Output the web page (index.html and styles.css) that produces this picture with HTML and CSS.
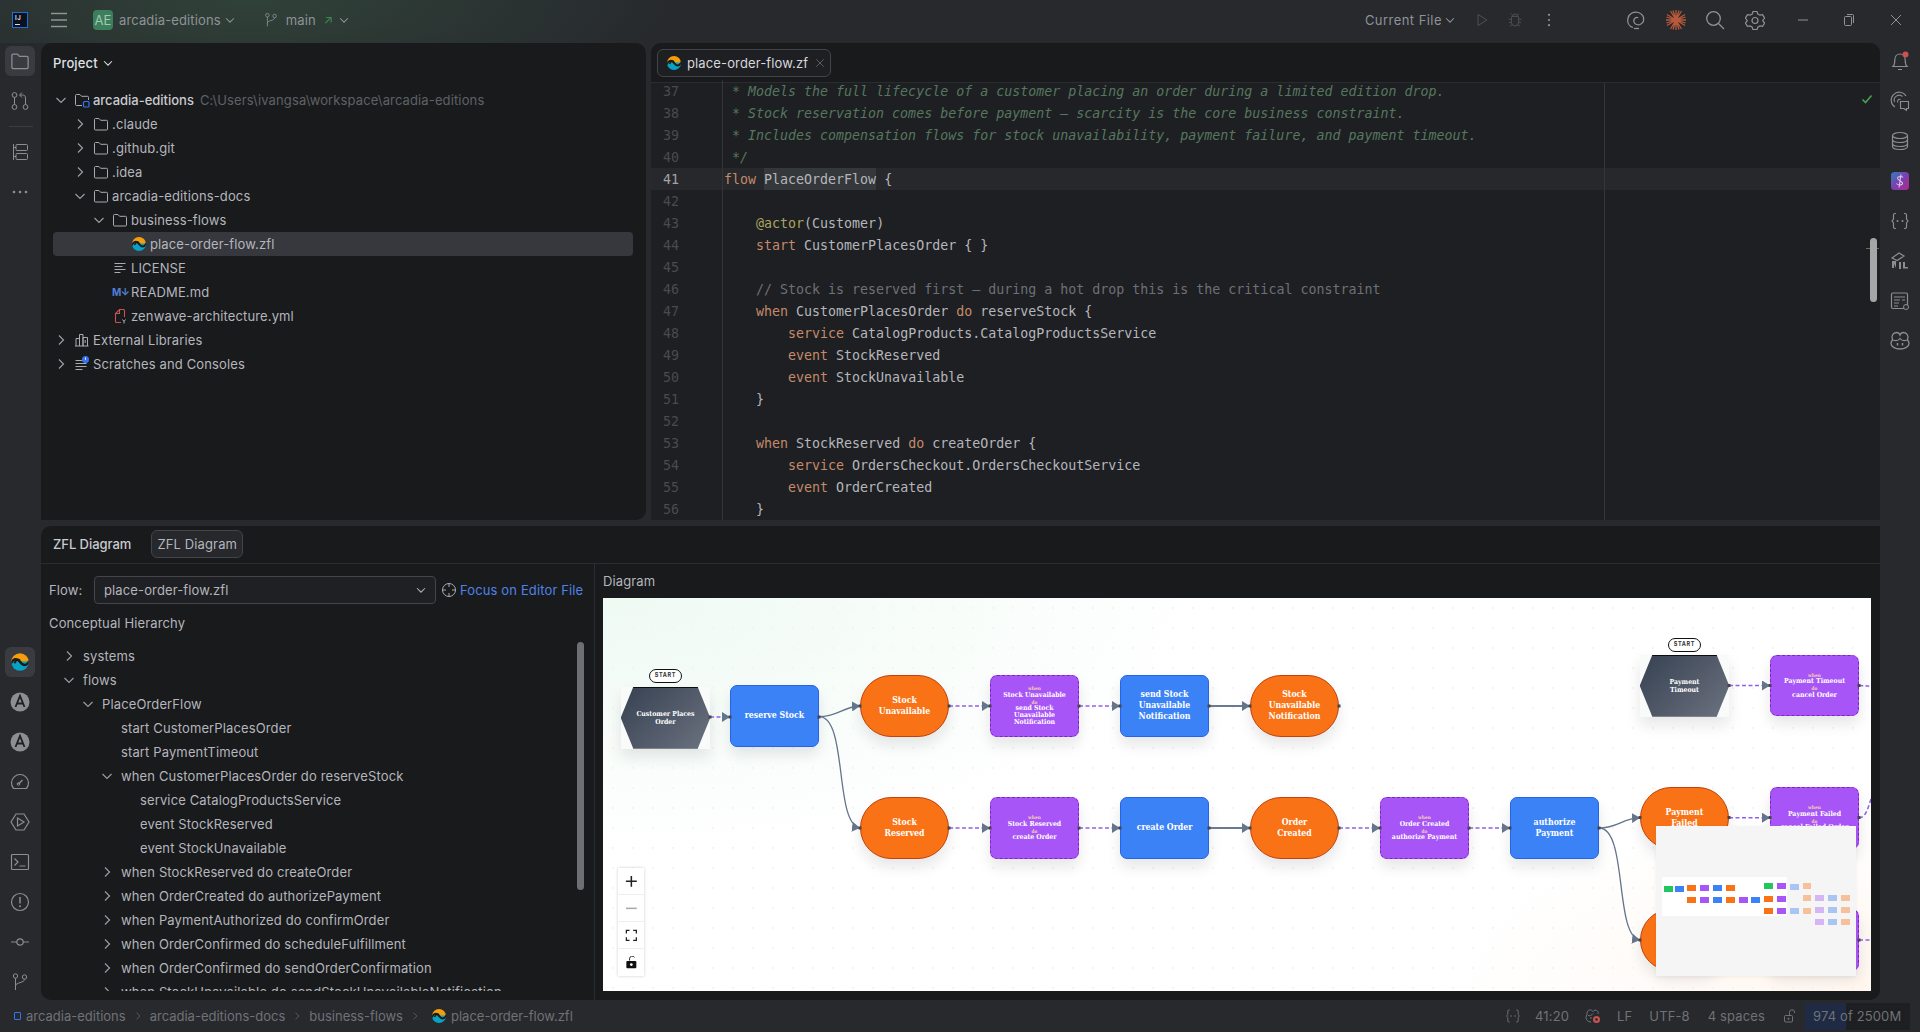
FILE: index.html
```html
<!DOCTYPE html>
<html lang="en">
<head>
<meta charset="utf-8">
<title>arcadia-editions – place-order-flow.zfl</title>
<link rel="stylesheet" href="styles.css">
</head>
<body>
<svg class="sprite" aria-hidden="true">
  <defs>
    <clipPath id="zc"><circle cx="8" cy="8" r="7"/></clipPath>
    <linearGradient id="sg" x1="0" y1="0" x2="1" y2="1"><stop offset="0" stop-color="#2f7fc1"/><stop offset=".5" stop-color="#7b3fb0"/><stop offset="1" stop-color="#b02a8c"/></linearGradient>
  </defs>
  <symbol id="zfl" viewBox="0 0 16 16">
    <g clip-path="url(#zc)"><rect width="16" height="8.5" fill="#f59e0b"/><rect y="7.5" width="16" height="9" fill="#06a3c4"/>
    <path d="M0 10.5C2.5 5 5.5 4.500 8 7.800S13 12 16 6.500" fill="none" stroke="#191a1c" stroke-width="2"/>
    <path d="M3.500 9C5 6 6.500 5.500 8 7" fill="none" stroke="#191a1c" stroke-width="1.600"/></g>
  </symbol>
  <symbol id="cr" viewBox="0 0 16 16"><path d="M6 3.500 10.500 8 6 12.500" fill="none" stroke="currentColor" stroke-width="1.200"/></symbol>
  <symbol id="cd" viewBox="0 0 16 16"><path d="M3.500 6 8 10.500 12.500 6" fill="none" stroke="currentColor" stroke-width="1.200"/></symbol>
  <symbol id="folder" viewBox="0 0 16 16"><path d="M1.500 3.500a1 1 0 0 1 1-1h3.400l1.700 1.800h5.900a1 1 0 0 1 1 1v7.700a1 1 0 0 1-1 1H2.500a1 1 0 0 1-1-1z" fill="none" stroke="currentColor"/></symbol>
  <symbol id="rootf" viewBox="0 0 16 16"><path d="M8 13.500H2.500a1 1 0 0 1-1-1v-9a1 1 0 0 1 1-1h3.400l1.700 1.800h5.900a1 1 0 0 1 1 1V8" fill="none" stroke="currentColor"/><rect x="9.500" y="9.500" width="5.500" height="5.500" rx="1" fill="none" stroke="#3574f0" stroke-width="1.200"/></symbol>
  <symbol id="text" viewBox="0 0 16 16"><path d="M2.500 3.500h11M2.500 6.500h8M2.500 9.500h11M2.500 12.500h6" fill="none" stroke="currentColor"/></symbol>
  <symbol id="yml" viewBox="0 0 16 16"><path d="M9 14.500H4.500a1 1 0 0 1-1-1v-8l4-4h4a1 1 0 0 1 1 1V9" fill="none" stroke="#c75450" stroke-width="1.100"/><path d="M7.500 1.500v4h-4" fill="none" stroke="#c75450" stroke-width="1.100"/><path d="M10.500 11.500l1.500 2 1.500-2M12 13.500v2" fill="none" stroke="#aeb0b5"/></symbol>
  <symbol id="libs" viewBox="0 0 16 16"><path d="M2 14V6.500h3.500V14M5.500 14V2.500H9V14M9 14V5.500h4.500V14M1 14h13.500M11.200 8v3" fill="none" stroke="currentColor"/></symbol>
  <symbol id="scratch" viewBox="0 0 16 16"><path d="M1.500 4.500h8M1.500 7.500h11M1.500 10.500h11M1.500 13.500h7" fill="none" stroke="currentColor"/><circle cx="11.500" cy="3.500" r="3.500" fill="#3574f0"/><path d="M11.500 1.500v2.300" stroke="#fff" stroke-width=".9"/></symbol>
  <symbol id="hamb" viewBox="0 0 20 20"><path d="M2 3.500h16M2 10h16M2 16.500h16" fill="none" stroke="currentColor" stroke-width="1.300"/></symbol>
  <symbol id="branch" viewBox="0 0 20 20"><circle cx="5.500" cy="4" r="2.200" fill="none" stroke="currentColor"/><circle cx="14.500" cy="5" r="2.200" fill="none" stroke="currentColor"/><path d="M5.500 6.200V18M14.500 7.200c0 4-9 3-9 6.800" fill="none" stroke="currentColor"/></symbol>
  <symbol id="commit" viewBox="0 0 20 20"><circle cx="4.500" cy="4" r="2.400" fill="none" stroke="currentColor"/><circle cx="4.500" cy="16" r="2.400" fill="none" stroke="currentColor"/><circle cx="15.500" cy="16" r="2.400" fill="none" stroke="currentColor"/><path d="M4.500 6.400v7.200M15.500 13.600V7c0-2-1-3-3-3H10M12 1.500 9.500 4l2.500 2.500" fill="none" stroke="currentColor"/></symbol>
  <symbol id="struct" viewBox="0 0 20 20"><path d="M3.500 2v16M3.500 5.500H6M3.500 14.500H6" fill="none" stroke="currentColor"/><rect x="6" y="2.500" width="11.500" height="6" rx="1" fill="none" stroke="currentColor"/><rect x="6" y="11.500" width="11.500" height="6" rx="1" fill="none" stroke="currentColor"/></symbol>
  <symbol id="dots" viewBox="0 0 20 20"><circle cx="4" cy="10" r="1.300" fill="currentColor"/><circle cx="10" cy="10" r="1.300" fill="currentColor"/><circle cx="16" cy="10" r="1.300" fill="currentColor"/></symbol>
  <symbol id="ang" viewBox="0 0 20 20"><circle cx="10" cy="10" r="9.500" fill="currentColor"/><path d="M5.500 15 10 4l4.500 11M7.500 11.500h5" fill="none" stroke="#1f2024" stroke-width="1.800"/></symbol>
  <symbol id="gauge" viewBox="0 0 20 20"><path d="M3.500 16.500h13a8.500 8.500 0 1 0-13 0z" fill="none" stroke="currentColor" stroke-width="1.200"/><path d="M8.500 12l4-4" fill="none" stroke="currentColor" stroke-width="1.400"/><circle cx="8.500" cy="12" r="1.300" fill="none" stroke="currentColor"/></symbol>
  <symbol id="hexplay" viewBox="0 0 20 20"><path d="M6 2h8l5 8-5 8H6l-5-8z" fill="none" stroke="currentColor" stroke-width="1.200"/><path d="M7.500 6l6.500 4-6.500 4z" fill="none" stroke="currentColor" stroke-width="1.200"/></symbol>
  <symbol id="term" viewBox="0 0 20 20"><rect x="1.500" y="2.500" width="17" height="15" rx="1" fill="none" stroke="currentColor" stroke-width="1.200"/><path d="M4.500 6.500 8 10l-3.500 3.500M9.500 14h6" fill="none" stroke="currentColor" stroke-width="1.200"/></symbol>
  <symbol id="warn" viewBox="0 0 20 20"><circle cx="10" cy="10" r="8.500" fill="none" stroke="currentColor" stroke-width="1.200"/><path d="M10 5v6.500" stroke="currentColor" stroke-width="1.500"/><circle cx="10" cy="14.300" r="1" fill="currentColor"/></symbol>
  <symbol id="cline" viewBox="0 0 20 20"><circle cx="10" cy="10" r="3.200" fill="none" stroke="currentColor" stroke-width="1.200"/><path d="M1 10h5.800M13.200 10H19" stroke="currentColor" stroke-width="1.200"/></symbol>
  <symbol id="bell" viewBox="0 0 20 20"><path d="M10 3C7 3 4.800 5.500 4.800 9c0 3-.3 5-1.800 6.500h14c-1.500-1.500-1.800-3.500-1.800-6.500 0-3.500-2.200-6-5.200-6zM8 18.500h4" fill="none" stroke="currentColor" stroke-width="1.200"/><circle cx="15.500" cy="3.500" r="3" fill="#c75450"/></symbol>
  <symbol id="aichat" viewBox="0 0 20 20"><path d="M5 16A8 8 0 1 1 16 5M4.500 11a5 5 0 0 1 8-5.500M8 11.500a2 2 0 0 1 2.500-3" fill="none" stroke="currentColor" stroke-width="1.100"/><path d="M10.500 10.500h8v7h-2v2l-2.500-2h-3.500z" fill="#27292d" stroke="currentColor" stroke-width="1.100"/></symbol>
  <symbol id="db" viewBox="0 0 20 20"><ellipse cx="10" cy="4.500" rx="7.500" ry="3" fill="none" stroke="currentColor" stroke-width="1.200"/><path d="M2.500 4.500v11c0 1.700 3.400 3 7.500 3s7.500-1.300 7.500-3v-11M2.500 8.500c0 1.700 3.400 3 7.500 3s7.500-1.300 7.500-3M2.500 12.500c0 1.700 3.400 3 7.500 3s7.500-1.300 7.500-3" fill="none" stroke="currentColor" stroke-width="1.200"/></symbol>
  <symbol id="sapp" viewBox="0 0 20 20"><rect x="1" y="1" width="18" height="18" rx="3.500" fill="url(#sg)"/><path d="M13 6.500c-1-1.500-5-1.500-5.500.5S12 10 12.500 12s-4 3-6 .5M11 3.500 9 16.500" fill="none" stroke="#d9c7ec" stroke-width="1.100"/></symbol>
  <symbol id="braces" viewBox="0 0 20 20"><path d="M6 2.500H5A1.500 1.500 0 0 0 3.500 4v4L2 10l1.500 2v4A1.500 1.500 0 0 0 5 17.500h1M14 2.500h1A1.500 1.500 0 0 1 16.500 4v4L18 10l-1.500 2v4a1.500 1.500 0 0 1-1.500 1.500h-1" fill="none" stroke="currentColor" stroke-width="1.200"/><circle cx="7.500" cy="10" r="1" fill="currentColor"/><circle cx="12.500" cy="10" r="1" fill="currentColor"/></symbol>
  <symbol id="cube" viewBox="0 0 20 20"><path d="M2 7l7-5 5 3-7 4.500z" fill="none" stroke="currentColor" stroke-width="1.200"/><path d="M2 10v7h2v-4l2 4V10zM9 11v7h2v-7zM13 11v6.500h5V16h-3v-5z" fill="currentColor"/></symbol>
  <symbol id="panel" viewBox="0 0 20 20"><rect x="1.500" y="2" width="16" height="15.500" rx="1.500" fill="none" stroke="currentColor" stroke-width="1.200"/><path d="M4 6h11M4 9h6M12 9h3M4 12h5M4 15h4" stroke="currentColor" stroke-width="1.200"/><circle cx="16" cy="16" r="2.500" fill="#27292d" stroke="currentColor"/></symbol>
  <symbol id="copilot" viewBox="0 0 20 20"><path d="M2.500 9C1 5 3 1.500 6.500 1.500c1.800 0 3 1 3.500 2.500.5-1.500 1.700-2.500 3.500-2.500C17 1.500 19 5 17.500 9c1 1 1.500 2 1.500 3.500 0 3-4 5.500-9 5.500s-9-2.500-9-5.500C1 11 1.500 10 2.500 9z" fill="none" stroke="currentColor" stroke-width="1.300"/><path d="M3 9c3 1.200 5.500.5 7-1.500 1.500 2 4 2.700 7 1.500" fill="none" stroke="currentColor" stroke-width="1.200"/><path d="M7.500 12v2.500M12.500 12v2.500" stroke="currentColor" stroke-width="1.500"/></symbol>
  <symbol id="play" viewBox="0 0 20 20"><path d="M5 3l11 7-11 7z" fill="none" stroke="currentColor" stroke-width="1.200"/></symbol>
  <symbol id="bug" viewBox="0 0 20 20"><path d="M6.500 5.500h7a1 1 0 0 1 1 1V13a4.500 4.500 0 0 1-9 0V6.500a1 1 0 0 1 1-1zM7 5.500a3 3 0 0 1 6 0M5.500 9H2M14.500 9H18M5.500 13H2.500M14.500 13h3M6 16l-2.500 2M14 16l2.500 2M7 4 5 2M13 4l2-2" fill="none" stroke="currentColor" stroke-width="1.200"/></symbol>
  <symbol id="vdots" viewBox="0 0 20 20"><circle cx="10" cy="3.500" r="1.400" fill="currentColor"/><circle cx="10" cy="10" r="1.400" fill="currentColor"/><circle cx="10" cy="16.500" r="1.400" fill="currentColor"/></symbol>
  <symbol id="swirl" viewBox="0 0 20 20"><path d="M7 17.500C2.500 16 1 12 2 8 3 3.500 8 1 12.500 2.500c4 1.300 6 5 5 8.500-1 3-4.500 4.500-7 3.500-2.500-1-3.300-3.500-2.300-5.500.8-1.500 2.800-2 4-1.200" fill="none" stroke="currentColor" stroke-width="1.300"/><path d="M13 18.500H8" stroke="currentColor" stroke-width="1.300"/></symbol>
  <symbol id="burst" viewBox="0 0 20 20"><path d="M10 0v20M4.500 1l11 18M15.500 1l-11 18M0 10h20M1 4.500l18 11M19 4.500l-18 11M7 .5l6 19M13 .5l-6 19M.5 7l19 6M.5 13l19-6" stroke="#b7593b" stroke-width="1.300"/></symbol>
  <symbol id="search" viewBox="0 0 20 20"><circle cx="8.500" cy="8.500" r="6.800" fill="none" stroke="currentColor" stroke-width="1.300"/><path d="M13.500 13.500l5.500 5.500" stroke="currentColor" stroke-width="1.300"/></symbol>
  <symbol id="gear" viewBox="0 0 20 20"><path d="M8 1.500h4l.8 2.500 2.200 1.200 2.600-.5 2 3.400-1.700 2v.9l1.700 2-2 3.400-2.600-.5-2.200 1.200-.8 2.500H8l-.8-2.500L5 15.900l-2.600.5-2-3.400 1.700-2v-.9l-1.700-2 2-3.400 2.600.5L7.200 4z" fill="none" stroke="currentColor" stroke-width="1.200"/><circle cx="10" cy="10.500" r="3" fill="none" stroke="currentColor" stroke-width="1.200"/></symbol>
  <symbol id="min" viewBox="0 0 16 16"><path d="M3 8h10" stroke="currentColor"/></symbol>
  <symbol id="rest" viewBox="0 0 16 16"><rect x="3.500" y="4.500" width="7" height="9" rx="1" fill="none" stroke="currentColor"/><path d="M6 2.500h5.500a1 1 0 0 1 1 1V11" fill="none" stroke="currentColor"/></symbol>
  <symbol id="close" viewBox="0 0 16 16"><path d="M3 3l10 10M13 3L3 13" stroke="currentColor"/></symbol>
  <symbol id="target" viewBox="0 0 16 16"><circle cx="8" cy="8" r="6.500" fill="none" stroke="currentColor"/><path d="M8 1v4M8 11v4M1 8h4M11 8h4" stroke="currentColor"/></symbol>
  <symbol id="lock" viewBox="0 0 16 16"><rect x="2.500" y="7.500" width="8" height="6.500" rx="1" fill="none" stroke="currentColor"/><path d="M7.500 7.500V4.500a2.500 2.500 0 0 1 5-.5V5" fill="none" stroke="currentColor"/><circle cx="6.500" cy="10.700" r="1" fill="currentColor"/></symbol>
  <symbol id="aioff" viewBox="0 0 16 16"><path d="M6 14c-3 0-5-2-5-4.500 0-1 .5-2 1-2.500C1.500 4 3 1.500 5.500 2c1 0 1.800.5 2.500 1.500C9 2 11 1.500 12.500 3c.8 1 .8 2 .6 3M3 7.500c2 .5 3.500 0 5-2M6 9v2" fill="none" stroke="currentColor"/><circle cx="11.500" cy="11.500" r="3.500" fill="#c75450"/><circle cx="11.500" cy="11.500" r="1.300" fill="#27292d"/></symbol>
</svg>

<div class="app">
  <header class="titlebar">
    <div class="ij-logo"><span class="ij-text">IJ</span><i class="ij-bar"></i></div>
    <svg class="ic20 hamb"><use href="#hamb"/></svg>
    <div class="badge">AE</div>
    <span class="t-project">arcadia-editions</span>
    <svg class="ic14 t-chev1"><use href="#cd"/></svg>
    <svg class="ic16 t-branch"><use href="#branch"/></svg>
    <span class="t-main">main</span>
    <span class="t-arrow">↗</span>
    <svg class="ic14 t-chev2"><use href="#cd"/></svg>
    <span class="t-spacer"></span>
    <span class="t-run">Current File</span>
    <svg class="ic14 t-chev3"><use href="#cd"/></svg>
    <svg class="ic16 t-play dim"><use href="#play"/></svg>
    <svg class="ic16 t-bug dim"><use href="#bug"/></svg>
    <svg class="ic16 t-vdots"><use href="#vdots"/></svg>
    <svg class="ic18 t-swirl"><use href="#swirl"/></svg>
    <svg class="ic20 t-burst"><use href="#burst"/></svg>
    <svg class="ic18 t-search"><use href="#search"/></svg>
    <svg class="ic18 t-gear"><use href="#gear"/></svg>
    <svg class="ic16 t-min"><use href="#min"/></svg>
    <svg class="ic16 t-rest"><use href="#rest"/></svg>
    <svg class="ic16 t-close"><use href="#close"/></svg>
  </header>

  <nav class="strip strip-left">
    <div class="strip-group">
      <div class="sbtn active"><svg class="ic18"><use href="#folder"/></svg></div>
      <div class="sbtn"><svg class="ic18"><use href="#commit"/></svg></div>
      <hr class="strip-sep">
      <div class="sbtn"><svg class="ic18"><use href="#struct"/></svg></div>
      <div class="sbtn"><svg class="ic18"><use href="#dots"/></svg></div>
    </div>
    <div class="strip-group">
      <div class="sbtn active"><svg class="ic20"><use href="#zfl"/></svg></div>
      <div class="sbtn"><svg class="ic20"><use href="#ang"/></svg></div>
      <div class="sbtn"><svg class="ic20"><use href="#ang"/></svg></div>
      <div class="sbtn"><svg class="ic18"><use href="#gauge"/></svg></div>
      <div class="sbtn"><svg class="ic18"><use href="#hexplay"/></svg></div>
      <div class="sbtn"><svg class="ic18"><use href="#term"/></svg></div>
      <div class="sbtn"><svg class="ic18"><use href="#warn"/></svg></div>
      <div class="sbtn"><svg class="ic18"><use href="#cline"/></svg></div>
      <div class="sbtn"><svg class="ic18"><use href="#branch"/></svg></div>
    </div>
  </nav>

  <main class="center">
    <div class="top">
      <section class="project">
        <div class="proj-head"><span class="proj-title">Project</span><svg class="ic14"><use href="#cd"/></svg></div>
        <div class="ptree">
          <div class="row d0"><svg class="chev"><use href="#cd"/></svg><svg class="pic"><use href="#rootf"/></svg><b class="root">arcadia-editions</b><span class="path">C:\Users\ivangsa\workspace\arcadia-editions</span></div>
          <div class="row d1"><svg class="chev"><use href="#cr"/></svg><svg class="pic"><use href="#folder"/></svg><span>.claude</span></div>
          <div class="row d1"><svg class="chev"><use href="#cr"/></svg><svg class="pic"><use href="#folder"/></svg><span>.github.git</span></div>
          <div class="row d1"><svg class="chev"><use href="#cr"/></svg><svg class="pic"><use href="#folder"/></svg><span>.idea</span></div>
          <div class="row d1"><svg class="chev"><use href="#cd"/></svg><svg class="pic"><use href="#folder"/></svg><span>arcadia-editions-docs</span></div>
          <div class="row d2"><svg class="chev"><use href="#cd"/></svg><svg class="pic"><use href="#folder"/></svg><span>business-flows</span></div>
          <div class="row d3 selected"><span class="chev"></span><svg class="pic"><use href="#zfl"/></svg><span>place-order-flow.zfl</span></div>
          <div class="row d2"><span class="chev"></span><svg class="pic"><use href="#text"/></svg><span>LICENSE</span></div>
          <div class="row d2"><span class="chev"></span><span class="md">M↓</span><span>README.md</span></div>
          <div class="row d2"><span class="chev"></span><svg class="pic"><use href="#yml"/></svg><span>zenwave-architecture.yml</span></div>
          <div class="row d0"><svg class="chev"><use href="#cr"/></svg><svg class="pic"><use href="#libs"/></svg><span>External Libraries</span></div>
          <div class="row d0"><svg class="chev"><use href="#cr"/></svg><svg class="pic"><use href="#scratch"/></svg><span>Scratches and Consoles</span></div>
        </div>
      </section>

      <section class="editor">
        <div class="tabs"><div class="tab"><svg class="ic16"><use href="#zfl"/></svg><span class="tab-name">place-order-flow.zf</span><svg class="ic12 tab-x"><use href="#close"/></svg></div></div>
        <div class="code">
          <div class="line"><span class="num">37</span><span class="src"><i class="cm"> * Models the full lifecycle of a customer placing an order during a limited edition drop.</i></span></div>
          <div class="line"><span class="num">38</span><span class="src"><i class="cm"> * Stock reservation comes before payment — scarcity is the core business constraint.</i></span></div>
          <div class="line"><span class="num">39</span><span class="src"><i class="cm"> * Includes compensation flows for stock unavailability, payment failure, and payment timeout.</i></span></div>
          <div class="line"><span class="num">40</span><span class="src"><i class="cm"> */</i></span></div>
          <div class="line current"><span class="num">41</span><span class="src"><span class="kw">flow</span> <span class="hl">PlaceOrderFlow</span> {</span></div>
          <div class="line"><span class="num">42</span><span class="src"></span></div>
          <div class="line"><span class="num">43</span><span class="src">    <span class="an">@actor</span>(Customer)</span></div>
          <div class="line"><span class="num">44</span><span class="src">    <span class="kw">start</span> CustomerPlacesOrder { }</span></div>
          <div class="line"><span class="num">45</span><span class="src"></span></div>
          <div class="line"><span class="num">46</span><span class="src">    <span class="lc">// Stock is reserved first — during a hot drop this is the critical constraint</span></span></div>
          <div class="line"><span class="num">47</span><span class="src">    <span class="kw">when</span> CustomerPlacesOrder <span class="kw">do</span> reserveStock {</span></div>
          <div class="line"><span class="num">48</span><span class="src">        <span class="kw">service</span> CatalogProducts.CatalogProductsService</span></div>
          <div class="line"><span class="num">49</span><span class="src">        <span class="kw">event</span> StockReserved</span></div>
          <div class="line"><span class="num">50</span><span class="src">        <span class="kw">event</span> StockUnavailable</span></div>
          <div class="line"><span class="num">51</span><span class="src">    }</span></div>
          <div class="line"><span class="num">52</span><span class="src"></span></div>
          <div class="line"><span class="num">53</span><span class="src">    <span class="kw">when</span> StockReserved <span class="kw">do</span> createOrder {</span></div>
          <div class="line"><span class="num">54</span><span class="src">        <span class="kw">service</span> OrdersCheckout.OrdersCheckoutService</span></div>
          <div class="line"><span class="num">55</span><span class="src">        <span class="kw">event</span> OrderCreated</span></div>
          <div class="line"><span class="num">56</span><span class="src">    }</span></div>
          <svg class="ok" viewBox="0 0 12 12"><path d="M1.500 6.500l3 3 6-7" fill="none" stroke="#499c54" stroke-width="1.700"/></svg>
          <b class="ed-mark"></b>
          <b class="ed-scroll"></b>
        </div>
      </section>
    </div>

    <section class="bottom">
      <div class="bt-head"><b class="bt-title">ZFL Diagram</b><span class="bt-tab">ZFL Diagram</span></div>
      <div class="bt-body">
        <div class="hier">
          <div class="flow-row">
            <label class="flow-label">Flow:</label>
            <div class="select"><span>place-order-flow.zfl</span><svg class="ic14"><use href="#cd"/></svg></div>
            <svg class="ic16 focus-ic"><use href="#target"/></svg>
            <a class="focus-link">Focus on Editor File</a>
          </div>
          <div class="hier-title">Conceptual Hierarchy</div>
          <div class="ctree">
            <div class="crow c0"><svg class="chev"><use href="#cr"/></svg><span>systems</span></div>
            <div class="crow c0"><svg class="chev"><use href="#cd"/></svg><span>flows</span></div>
            <div class="crow c1"><svg class="chev"><use href="#cd"/></svg><span>PlaceOrderFlow</span></div>
            <div class="crow c2"><span class="chev"></span><span>start CustomerPlacesOrder</span></div>
            <div class="crow c2"><span class="chev"></span><span>start PaymentTimeout</span></div>
            <div class="crow c2"><svg class="chev"><use href="#cd"/></svg><span>when CustomerPlacesOrder do reserveStock</span></div>
            <div class="crow c3"><span class="chev"></span><span>service CatalogProductsService</span></div>
            <div class="crow c3"><span class="chev"></span><span>event StockReserved</span></div>
            <div class="crow c3"><span class="chev"></span><span>event StockUnavailable</span></div>
            <div class="crow c2"><svg class="chev"><use href="#cr"/></svg><span>when StockReserved do createOrder</span></div>
            <div class="crow c2"><svg class="chev"><use href="#cr"/></svg><span>when OrderCreated do authorizePayment</span></div>
            <div class="crow c2"><svg class="chev"><use href="#cr"/></svg><span>when PaymentAuthorized do confirmOrder</span></div>
            <div class="crow c2"><svg class="chev"><use href="#cr"/></svg><span>when OrderConfirmed do scheduleFulfillment</span></div>
            <div class="crow c2"><svg class="chev"><use href="#cr"/></svg><span>when OrderConfirmed do sendOrderConfirmation</span></div>
            <div class="crow c2"><svg class="chev"><use href="#cr"/></svg><span>when StockUnavailable do sendStockUnavailableNotification</span></div>
          </div>
          <b class="c-scroll"></b>
        </div>
        <div class="diagram">
          <div class="diagram-label">Diagram</div>
          <div class="canvas">
            <span class="start st1">START</span>
            <span class="start st2">START</span>
            <div class="node hex h1"><span>Customer Places<br>Order</span></div>
            <div class="node cmd x1 y3">reserve Stock</div>
            <div class="node evt x2 y2">Stock<br>Unavailable</div>
            <div class="node evt x2 y5">Stock<br>Reserved</div>
            <div class="node pol x3 y2"><em>when</em>Stock Unavailable<em>do</em>send Stock<br>Unavailable<br>Notification</div>
            <div class="node cmd x4 y2">send Stock<br>Unavailable<br>Notification</div>
            <div class="node evt x5 y2">Stock<br>Unavailable<br>Notification</div>
            <div class="node pol x3 y5"><em>when</em>Stock Reserved<em>do</em>create Order</div>
            <div class="node cmd x4 y5">create Order</div>
            <div class="node evt x5 y5">Order<br>Created</div>
            <div class="node pol x6 y5"><em>when</em>Order Created<em>do</em>authorize Payment</div>
            <div class="node cmd x7 y5">authorize<br>Payment</div>
            <div class="node evt x8 y4">Payment<br>Failed</div>
            <div class="node evt x8 y6">Payment<br>Authorized</div>
            <div class="node hex h2"><span>Payment<br>Timeout</span></div>
            <div class="node pol x9 y1"><em>when</em>Payment Timeout<em>do</em>cancel Order</div>
            <div class="node pol x9 y4"><em>when</em>Payment Failed<em>do</em>cancel Failed Order</div>
            <div class="node pol x9 y6"><em>when</em>Payment Authorized<em>do</em>confirm Order</div>

            <svg class="edges" viewBox="603 598 1268 393">
              <defs>
                <marker id="ah" viewBox="0 0 8 10" refX="8" refY="5" markerWidth="8" markerHeight="10" markerUnits="userSpaceOnUse" orient="auto"><path d="M0 0l8 5-8 5z" fill="#64748b"/></marker>
              </defs>
              <g class="dash">
                <path d="M710 717H730" marker-end="url(#ah)"/>
                <path d="M949 706H990" marker-end="url(#ah)"/>
                <path d="M1079 706H1120" marker-end="url(#ah)"/>
                <path d="M949 828H990" marker-end="url(#ah)"/>
                <path d="M1079 828H1120" marker-end="url(#ah)"/>
                <path d="M1339 828H1380" marker-end="url(#ah)"/>
                <path d="M1469 828H1510" marker-end="url(#ah)"/>
                <path d="M1729 685.500H1770" marker-end="url(#ah)"/>
                <path d="M1729 817.700H1770" marker-end="url(#ah)"/>
                <path d="M1859 685.500C1864 685.500 1866 686 1871 686.500"/>
                <path d="M1859 817.700C1866 817.700 1868 808 1871 799"/>
                <path d="M1859 940H1871"/>
              </g>
              <g class="solid">
                <path d="M1209 706H1250" marker-end="url(#ah)"/>
                <path d="M1209 828H1250" marker-end="url(#ah)"/>
              </g>
              <g class="curve">
                <path d="M819 716.700C838 716.700 842 707 860 706" marker-end="url(#ah)"/>
                <path d="M819 716.700C848 716.700 834 824 860 828" marker-end="url(#ah)"/>
                <path d="M1599 828C1618 828 1622 818.500 1640 817.700" marker-end="url(#ah)"/>
                <path d="M1599 828C1628 828 1614 936 1640 940" marker-end="url(#ah)"/>
              </g>
              <g class="ports">
                <rect x="708.500" y="715.500" width="3" height="3"/><rect x="728.500" y="715.500" width="3" height="3"/>
                <rect x="817.500" y="715.500" width="3" height="3"/><rect x="858.500" y="704.500" width="3" height="3"/>
                <rect x="858.500" y="826.500" width="3" height="3"/><rect x="947.500" y="704.500" width="3" height="3"/>
                <rect x="947.500" y="826.500" width="3" height="3"/><rect x="988.500" y="704.500" width="3" height="3"/>
                <rect x="988.500" y="826.500" width="3" height="3"/><rect x="1077.500" y="704.500" width="3" height="3"/>
                <rect x="1077.500" y="826.500" width="3" height="3"/><rect x="1118.500" y="704.500" width="3" height="3"/>
                <rect x="1118.500" y="826.500" width="3" height="3"/><rect x="1207.500" y="704.500" width="3" height="3"/>
                <rect x="1207.500" y="826.500" width="3" height="3"/><rect x="1248.500" y="704.500" width="3" height="3"/>
                <rect x="1248.500" y="826.500" width="3" height="3"/><rect x="1337.500" y="704.500" width="3" height="3"/>
                <rect x="1337.500" y="826.500" width="3" height="3"/><rect x="1378.500" y="826.500" width="3" height="3"/>
                <rect x="1467.500" y="826.500" width="3" height="3"/><rect x="1508.500" y="826.500" width="3" height="3"/>
                <rect x="1597.500" y="826.500" width="3" height="3"/><rect x="1638.500" y="816" width="3" height="3"/>
                <rect x="1638.500" y="938.500" width="3" height="3"/><rect x="1727.500" y="684" width="3" height="3"/>
                <rect x="1727.500" y="816" width="3" height="3"/><rect x="1768.500" y="684" width="3" height="3"/>
                <rect x="1768.500" y="816" width="3" height="3"/><rect x="1857.500" y="684" width="3" height="3"/>
                <rect x="1857.500" y="816" width="3" height="3"/><rect x="1857.500" y="938.500" width="3" height="3"/>
              </g>
            </svg>

            <div class="zoomctl">
              <button class="zbtn"><svg viewBox="0 0 14 14"><path d="M7 1v12M1 7h12" stroke="#222" stroke-width="1.700"/></svg></button>
              <button class="zbtn"><svg viewBox="0 0 14 14"><path d="M1 7h12" stroke="#aaa" stroke-width="1.700"/></svg></button>
              <button class="zbtn"><svg viewBox="0 0 14 14"><path d="M1.500 5V1.500H5M9 1.500h3.500V5M12.500 9v3.500H9M5 12.500H1.500V9" fill="none" stroke="#222" stroke-width="1.400"/></svg></button>
              <button class="zbtn"><svg viewBox="0 0 14 14"><path d="M2.500 5.500h9a1 1 0 0 1 1 1v6a1 1 0 0 1-1 1h-9a1 1 0 0 1-1-1v-6a1 1 0 0 1 1-1z" fill="#111"/><path d="M5 5V3a3 3 0 0 1 5.500-1.500" fill="none" stroke="#111" stroke-width="1"/><circle cx="7" cy="9.500" r="1.500" fill="#fff"/></svg></button>
            </div>

            <svg class="minimap" viewBox="48 -12 600 450">
              <rect x="48" y="-12" width="600" height="450" fill="#f5f5f5"/>
              <rect x="66" y="141" width="375" height="117" fill="#fff"/>
              <g fill="#22c55e"><rect x="72" y="168" width="27" height="18"/><rect x="372" y="159" width="27" height="18"/></g>
              <g fill="#3b82f6"><rect x="105" y="168" width="27" height="18"/><rect x="219" y="165" width="27" height="18"/><rect x="219" y="201" width="27" height="18"/><rect x="333" y="201" width="27" height="18"/></g>
              <g fill="#f97316"><rect x="141" y="165" width="27" height="18"/><rect x="258" y="165" width="27" height="18"/><rect x="141" y="201" width="27" height="18"/><rect x="258" y="201" width="27" height="18"/><rect x="372" y="198" width="27" height="18"/><rect x="372" y="234" width="27" height="18"/></g>
              <g fill="#a855f7"><rect x="180" y="165" width="27" height="18"/><rect x="180" y="201" width="27" height="18"/><rect x="297" y="201" width="27" height="18"/><rect x="411" y="159" width="27" height="18"/><rect x="411" y="198" width="27" height="18"/><rect x="411" y="234" width="27" height="18"/></g>
              <g fill="#a9c6f3"><rect x="450" y="162" width="27" height="18"/><rect x="450" y="234" width="27" height="18"/><rect x="564" y="195" width="27" height="18"/><rect x="564" y="231" width="27" height="18"/><rect x="564" y="267" width="27" height="18"/></g>
              <g fill="#f6c19a"><rect x="489" y="159" width="24" height="18"/><rect x="489" y="195" width="24" height="18"/><rect x="489" y="234" width="24" height="18"/><rect x="603" y="195" width="27" height="18"/><rect x="603" y="231" width="27" height="18"/><rect x="603" y="267" width="27" height="18"/></g>
              <g fill="#d5b5f3"><rect x="525" y="195" width="27" height="18"/><rect x="525" y="231" width="27" height="18"/><rect x="525" y="267" width="27" height="18"/></g>
            </svg>
          </div>
        </div>
      </div>
    </section>
  </main>

  <nav class="strip strip-right">
    <div class="sbtn"><svg class="ic18"><use href="#bell"/></svg></div>
    <div class="sbtn"><svg class="ic18"><use href="#aichat"/></svg></div>
    <div class="sbtn"><svg class="ic18"><use href="#db"/></svg></div>
    <div class="sbtn"><svg class="ic18"><use href="#sapp"/></svg></div>
    <div class="sbtn"><svg class="ic18"><use href="#braces"/></svg></div>
    <div class="sbtn"><svg class="ic18"><use href="#cube"/></svg></div>
    <div class="sbtn"><svg class="ic18"><use href="#panel"/></svg></div>
    <div class="sbtn"><svg class="ic18"><use href="#copilot"/></svg></div>
  </nav>

  <footer class="status">
    <i class="crumb-box"></i>
    <span class="crumb">arcadia-editions</span><svg class="ic12 crumb-sep"><use href="#cr"/></svg>
    <span class="crumb">arcadia-editions-docs</span><svg class="ic12 crumb-sep"><use href="#cr"/></svg>
    <span class="crumb">business-flows</span><svg class="ic12 crumb-sep"><use href="#cr"/></svg>
    <svg class="ic16 crumb-ic"><use href="#zfl"/></svg><span class="crumb">place-order-flow.zfl</span>
    <span class="t-spacer"></span>
    <svg class="ic16 s-brace"><use href="#braces"/></svg>
    <span class="s-pos">41:20</span>
    <svg class="ic16 s-ai"><use href="#aioff"/></svg>
    <span class="s-lf">LF</span>
    <span class="s-enc">UTF-8</span>
    <span class="s-ind">4 spaces</span>
    <svg class="ic16 s-lock"><use href="#lock"/></svg>
    <span class="s-mem">974 of 2500M</span>
  </footer>
</div>
</body>
</html>
```

FILE: styles.css
```css
* { box-sizing: border-box; }
html, body { margin: 0; height: 100%; overflow: hidden; }
body { background: #27292d; color: #b4b6bc; font: 13px/16px Inter, "Noto Sans", sans-serif; letter-spacing: .13px; }
.sprite { position: absolute; width: 0; height: 0; overflow: hidden; }
svg { display: block; flex: none; }
.ic12 { width: 12px; height: 12px; }
.ic14 { width: 14px; height: 14px; }
.ic16 { width: 16px; height: 16px; }
.ic18 { width: 20px; height: 20px; }
.ic20 { width: 20px; height: 20px; }

.app { display: grid; grid-template-columns: 41px 1839px 40px; grid-template-rows: 43px 957px 32px; height: 1032px; color: #b4b6bc; }

/* title bar */
.titlebar { grid-column: 1 / -1; display: flex; align-items: center; padding-bottom: 3px; color: #8f9297;
  background: radial-gradient(ellipse 430px 120px at 250px 0, rgba(72, 130, 88, .28), rgba(72, 130, 88, 0)), #27292d; }
.ij-logo { width: 16px; height: 16px; margin-left: 12px; border: 1px solid #1d6fd0; background: #0c1220; display: flex; flex-direction: column; padding: 1px 0 0 2px; }
.ij-text { font-size: 6px; line-height: 7px; font-weight: 700; color: #d8dbe0; letter-spacing: .5px; }
.ij-bar { width: 5px; height: 1px; background: #d8dbe0; margin-top: 3px; }
.hamb { margin-left: 21px; }
.badge { width: 20px; height: 20px; margin-left: 24px; border-radius: 4px; background: #3d7e5c; color: #9fcbb0; font-size: 13px; line-height: 20px; text-align: center; }
.t-project { margin-left: 6px; color: #8f9297; }
.t-chev1 { margin-left: 2px; }
.t-branch { margin-left: 26px; }
.t-main { margin-left: 7px; }
.t-arrow { margin-left: 8px; color: #3f8a53; font-size: 12px; }
.t-chev2 { margin-left: 4px; }
.t-spacer { flex: 1; }
.t-run { color: #8f9297; letter-spacing: .45px; }
.t-chev3 { margin-left: 1px; }
.dim { color: #505256; }
.t-play { margin-left: 17px; }
.t-bug { margin-left: 17px; }
.t-vdots { margin-left: 18px; }
.t-swirl { margin-left: 69px; }
.t-burst { margin-left: 20px; }
.t-search { margin-left: 19px; }
.t-gear { margin-left: 20px; }
.t-min { margin-left: 30px; }
.t-rest { margin-left: 30px; }
.t-close { margin-left: 31px; margin-right: 16px; }

/* tool strips */
.strip { display: flex; flex-direction: column; align-items: center; color: #8b8e93; }
.strip-left { justify-content: space-between; padding: 3px 0 0; height: 957px; }
.strip-group { display: flex; flex-direction: column; align-items: center; width: 100%; }
.strip-group .sbtn { height: 30px; margin-bottom: 10px; }
.strip-group .sbtn:last-child { margin-bottom: 0; }
.strip-left > .strip-group:last-child { padding-bottom: 3px; }
.sbtn { width: 30px; height: 30px; margin-left: -1px; flex: none; display: flex; align-items: center; justify-content: center; border-radius: 6px; }
.sbtn.active { background: #393b40; }
.strip-sep { width: 24px; height: 1px; margin: -0.5px 0 10px; border: 0; background: #3a3c41; }
.strip-right { padding-top: 3px; gap: 10px; }
.strip-right .sbtn { margin-left: 0; }

/* panels */
.center { display: flex; flex-direction: column; gap: 6px; min-width: 0; }
.top { display: flex; gap: 5px; height: 477px; }
.project { width: 605px; background: #191a1c; border-radius: 10px 10px 10px 0; overflow: hidden; }
.proj-head { display: flex; align-items: center; gap: 3px; height: 40px; padding-left: 12px; color: #dfe1e5; }
.proj-title { font-weight: 500; }
.ptree { padding: 5px 13px 0 12px; }
.row { display: flex; align-items: center; height: 24px; white-space: nowrap; border-radius: 4px; }
.d1 { padding-left: 19px; }
.d2 { padding-left: 38px; }
.d3 { padding-left: 57px; }
.selected { background: #36383d; }
.chev { width: 16px; height: 16px; flex: none; color: #9a9da2; }
.pic { width: 16px; height: 16px; margin: 0 3px 0 5px; color: #a8abb0; }
.root { font-weight: 500; letter-spacing: -.02px; color: #c9cbd0; }
.path { margin-left: 6px; color: #5e6166; }
.md { width: 16px; margin: 0 3px 0 5px; font: 700 10px/16px Inter, sans-serif; letter-spacing: -.5px; color: #4f7fd6; white-space: nowrap; }

.editor { width: 1229px; background: #1e1f22; border-radius: 10px 10px 0 0; overflow: hidden; display: flex; flex-direction: column; }
.tabs { height: 40px; flex: none; padding: 6px 0 0 6px; background: #191a1c; border-bottom: 1px solid #2a2c2f; }
.tab { width: 174px; height: 28px; display: flex; align-items: center; border: 1px solid #43454a; border-radius: 6px; background: #1e1f22; padding-left: 8px; color: #d6d8dc; }
.tab-name { margin-left: 5px; width: 122px; overflow: hidden; white-space: nowrap; }
.tab-x { margin-left: 5px; color: #6f7277; }
.code { position: relative; flex: 1; overflow: hidden; margin-top: -3px; font: 13.3px/24px "DejaVu Sans Mono", "Liberation Mono", monospace; letter-spacing: 0; color: #b4b6bc; }
.code::after { content: ""; position: absolute; top: 3px; bottom: 0; left: 953px; width: 1px; background: #34363a; }
.line { display: flex; height: 22px; white-space: pre; }
.num { width: 71px; flex: none; padding-right: 43px; text-align: right; color: #484b50; }
.src { flex: 1; padding-left: 1px; border-left: 1px solid #33353a; }
.current { background: #26282c; }
.current .num { color: #a1a3a9; }
.cm { color: #55775f; }
.kw { color: #c48a6b; }
.an { color: #a9a55e; }
.lc { color: #6d7076; }
.hl { display: inline-block; height: 22px; line-height: 24px; background: #35383a; vertical-align: top; }
.ok { position: absolute; left: 1210px; top: 13px; width: 12px; height: 12px; }
.ed-scroll { position: absolute; left: 1219px; top: 158px; width: 7px; height: 64px; border-radius: 4px; background: #a6a6a6; }
.ed-mark { position: absolute; left: 1215px; top: 168px; width: 13px; height: 1px; background: #4b7a57; }

.bottom { flex: 1; background: #191a1c; border-radius: 10px 0 10px 10px; display: flex; flex-direction: column; overflow: hidden; }
.bt-head { height: 38px; flex: none; display: flex; align-items: center; padding: 0 0 1px 12px; border-bottom: 1px solid #2a2c2f; }
.bt-title { font-weight: 500; letter-spacing: -.05px; color: #c9cbd0; }
.bt-tab { margin-left: 20px; width: 92px; height: 28px; line-height: 26px; text-align: center; border: 1px solid #43454a; border-radius: 6px; background: #26282c; color: #b4b6bc; }
.bt-body { flex: 1; display: flex; min-height: 0; }
.hier { position: relative; width: 554px; flex: none; display: flex; flex-direction: column; border-right: 1px solid #2a2c2f; }
.flow-row { display: flex; align-items: center; height: 28px; margin-top: 12px; padding-left: 8px; white-space: nowrap; }
.flow-label { width: 45px; }
.select { width: 342px; height: 28px; display: flex; align-items: center; justify-content: space-between; padding: 0 7px 0 9px; border: 1px solid #43454a; border-radius: 4px; background: #1f2023; }
.focus-ic { margin-left: 5px; color: #a8abb0; }
.focus-link { margin-left: 3px; color: #4f82e8; }
.hier-title { margin: 11px 0 0 8px; height: 16px; }
.ctree { flex: 1; min-height: 0; overflow: hidden; margin-top: 13px; padding-left: 20px; margin-bottom: 9px; }
.crow { display: flex; align-items: center; height: 24px; white-space: nowrap; }
.crow .chev { margin-right: 6px; }
.c1 { padding-left: 19px; }
.c2 { padding-left: 38px; }
.c3 { padding-left: 57px; }
.c-scroll { position: absolute; left: 536px; top: 78px; width: 7px; height: 248px; border-radius: 4px; background: #6e6f72; }

.diagram { flex: 1; min-width: 0; display: flex; flex-direction: column; padding: 0 9px 9px 8px; }
.diagram-label { height: 34px; line-height: 34px; }
.canvas { position: relative; flex: 1; overflow: hidden;
  background:
    radial-gradient(circle, #f4f4f4 0.7px, rgba(244, 244, 244, 0) 1px) 0 0 / 20px 20px,
    radial-gradient(ellipse 620px 260px at 0 0, #effaf3, rgba(239, 250, 243, 0)),
    radial-gradient(ellipse 420px 180px at 100% 100%, #fff6ef, rgba(255, 246, 239, 0)),
    #fff; }

/* diagram nodes */
.node { position: absolute; width: 89.6px; height: 61.6px; display: flex; flex-direction: column; align-items: center; justify-content: center; text-align: center; color: #fff; font-family: "DejaVu Serif", "Liberation Serif", serif; font-weight: 700; font-stretch: condensed; font-size: 8.7px; line-height: 11px; letter-spacing: 0; box-shadow: 0 8px 14px rgba(15, 23, 42, .1); }
.cmd { background: #3b82f6; border: 1px solid #2563eb; border-radius: 7px; }
.evt { background: #f97316; border: 1px solid #c2410c; border-radius: 31px; }
.pol { background: #a855f7; border: 1px dashed #7e22ce; border-radius: 7px; font-size: 6.9px; line-height: 7px; }
.pol em { display: block; font-style: normal; font-size: 4.8px; line-height: 6.5px; color: #f6d3a8; }
.hex { background: #f9fbfa; font-size: 6.9px; line-height: 8px; }
.hex::before { content: ""; position: absolute; inset: 0; background: linear-gradient(135deg, #374151, #6b7280); border-top: 1px solid #0b0d12; border-bottom: 1px solid #0b0d12; clip-path: polygon(0 50%, 14% 0, 86% 0, 100% 50%, 86% 100%, 14% 100%); }
.hex span { position: relative; }
.h1 { left: 17.7px; top: 89px; }
.h2 { left: 1036.7px; top: 57px; }
.x1 { left: 126.7px; }
.x2 { left: 256.7px; }
.x3 { left: 386.7px; }
.x4 { left: 516.7px; }
.x5 { left: 646.7px; }
.x6 { left: 776.7px; }
.x7 { left: 906.7px; }
.x8 { left: 1036.7px; }
.x9 { left: 1166.7px; }
.y1 { top: 56.5px; }
.y2 { top: 77px; }
.y3 { top: 87px; }
.y4 { top: 189px; }
.y5 { top: 199px; }
.y6 { top: 311px; }
.start { position: absolute; width: 33.5px; height: 14px; border: 1.5px solid #111; border-radius: 7px; background: #fff; color: #333; font: 700 5.5px/11px Inter, sans-serif; letter-spacing: .6px; text-align: center; }
.st1 { left: 45.7px; top: 71px; }
.st2 { left: 1064.7px; top: 40px; }
.edges { position: absolute; inset: 0; width: 100%; height: 100%; fill: none; }
.dash path { stroke: #9061e6; stroke-width: 1.5; stroke-dasharray: 4 2.5; }
.solid path { stroke: #6b7a90; stroke-width: 2; }
.curve path { stroke: #64748b; stroke-width: 1.3; }
.ports rect { fill: #44464c; }
.zoomctl { position: absolute; left: 14.7px; top: 270px; display: flex; flex-direction: column; width: 26.7px; background: #fff; box-shadow: 0 0 3px rgba(0, 0, 0, .2); }
.zbtn { width: 100%; height: 27px; padding: 7px; border: 0; border-bottom: 1px solid #eee; background: #fff; }
.zbtn:last-child { border-bottom: 0; }
.minimap { position: absolute; left: 1053px; top: 228px; width: 200px; height: 150px; box-shadow: 0 1px 4px rgba(0, 0, 0, .06); }

/* status bar */
.status { grid-column: 1 / -1; display: flex; align-items: center; padding-right: 10px; color: #6f7277; white-space: nowrap; height: 32px; }
.crumb { letter-spacing: 0; }
.crumb-box { width: 7px; height: 8px; margin-left: 14px; margin-right: 5px; border: 1px solid #3574f0; border-radius: 1px; }
.crumb-sep { margin: 0 6px; color: #5c5f64; }
.crumb-ic { margin: 0 4px 0 4px; }
.s-brace { margin-right: 14px; }
.s-ai { margin: 0 8px 0 16px; }
.s-lf { margin-left: 8px; }
.s-enc { margin-left: 17px; }
.s-ind { margin-left: 18px; }
.s-lock { margin-left: 17px; }
.s-mem { margin-left: 7px; width: 105px; height: 27px; line-height: 27px; padding-left: 8px; background: linear-gradient(90deg, #1f2a44 39%, #1e1f22 39%); }
```
